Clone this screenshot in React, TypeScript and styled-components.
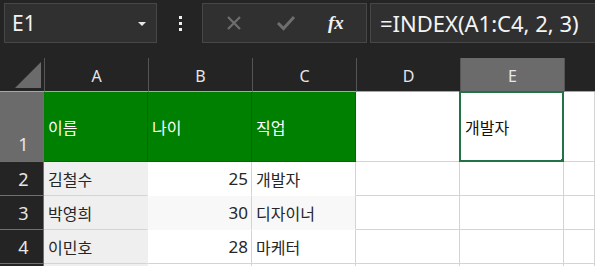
import React from "react";
import styled, { createGlobalStyle } from "styled-components";

const Global = createGlobalStyle`
  html, body { margin: 0; padding: 0; background: #242424; }
  body { width: 595px; height: 266px; overflow: hidden; font-family: "Noto Sans", "Noto Sans CJK KR", sans-serif; }
`;

const Page = styled.div`
  width: 595px;
  height: 266px;
  background: #242424;
  overflow: hidden;
`;

const Toolbar = styled.div`
  height: 58px;
  display: flex;
  align-items: flex-start;
  padding: 3px 0 0 4px;
  box-sizing: border-box;
`;

const Box = styled.div`
  height: 40px;
  box-sizing: border-box;
  background: #303030;
  border: 1px solid #474747;
  display: flex;
  align-items: center;
`;

const NameBox = styled(Box)`
  width: 153px;
  padding: 0 10px 0 7px;
  justify-content: space-between;
  color: #f2f2f2;
  font-size: 21px;
`;

const Caret = styled.span`
  width: 0;
  height: 0;
  border-left: 4px solid transparent;
  border-right: 4px solid transparent;
  border-top: 4px solid #e8e8e8;
  margin-top: 1px;
`;

const Kebab = styled.div`
  width: 44px;
  height: 40px;
  display: flex;
  flex-direction: column;
  align-items: center;
  justify-content: center;
  gap: 3px;
  margin-left: 1px;
`;

const Dot = styled.span`
  width: 3px;
  height: 3px;
  background: #f0f0f0;
`;

const ButtonBox = styled(Box)`
  width: 165px;
  justify-content: space-around;
  padding: 0 6px;
`;

const Fx = styled.span`
  font-family: "Liberation Serif", serif;
  font-style: italic;
  font-weight: bold;
  font-size: 19px;
  color: #f2f2f2;
`;

const FormulaBox = styled(Box)`
  flex: 1;
  margin-left: 3px;
  border-right: none;
  padding-left: 9px;
  color: #f4f4f4;
  font-size: 22px;
  white-space: nowrap;
`;

const Grid = styled.div`
  display: grid;
  grid-template-columns: 44px 104px 104px 104px 104px 104px 1fr;
  grid-template-rows: 34px 70px 34px 34px 34px 34px;
`;

const Corner = styled.div`
  background: #242424;
  border-bottom: 1px solid #a6a6a6;
  position: relative;
  &::after {
    content: "";
    position: absolute;
    right: 3px;
    bottom: 3px;
    width: 0;
    height: 0;
    border-left: 26px solid transparent;
    border-bottom: 26px solid #6b6b6b;
  }
`;

const ColHead = styled.div<{ $active?: boolean }>`
  background: ${(p) => (p.$active ? "#6b6b6b" : "#242424")};
  border-left: 1px solid #555;
  border-bottom: 1px solid #a6a6a6;
  color: #e6e6e6;
  font-size: 16px;
  display: flex;
  align-items: center;
  justify-content: center;
  padding-top: 2px;
  box-sizing: border-box;
`;

const RowHead = styled.div<{ $active?: boolean }>`
  background: ${(p) => (p.$active ? "#6b6b6b" : "#242424")};
  border-bottom: 1px solid #6f6f6f;
  border-right: 1px solid #6f6f6f;
  color: #e6e6e6;
  font-size: 18px;
  display: flex;
  align-items: ${(p) => (p.$active ? "flex-end" : "center")};
  justify-content: center;
  padding-bottom: ${(p) => (p.$active ? "5px" : "0")};
  padding-left: 4px;
  box-sizing: border-box;
`;

type CellKind = "head" | "name" | "plain" | "shade";

const Cell = styled.div<{ $kind: CellKind; $right?: boolean; $noBottom?: boolean }>`
  position: relative;
  box-sizing: border-box;
  display: flex;
  align-items: center;
  justify-content: ${(p) => (p.$right ? "flex-end" : "flex-start")};
  padding: ${(p) => (p.$right ? "0 3px 0 0" : "0 0 0 4px")};
  font-family: "Noto Sans CJK KR", "Noto Sans", sans-serif;
  font-size: 16px;
  white-space: nowrap;
  background: ${(p) =>
    p.$kind === "head" ? "#008000" : p.$kind === "name" ? "#efefef" : p.$kind === "shade" ? "#f8f8f8" : "#ffffff"};
  color: ${(p) => (p.$kind === "head" ? "#ffffff" : "#262626")};
  border-right: 1px solid
    ${(p) => (p.$kind === "head" ? "#006a00" : p.$kind === "name" ? "#efefef" : "#d4d4d4")};
  border-bottom: 1px solid
    ${(p) => (p.$kind === "head" ? "#006a00" : p.$noBottom ? "transparent" : "#d4d4d4")};
`;

const Num = styled.span`
  font-family: "Noto Sans", sans-serif;
  font-size: 17px;
`;

const Selection = styled.div`
  position: absolute;
  left: -1px;
  top: -1px;
  right: -1px;
  bottom: -1px;
  border: 2px solid #217346;
  pointer-events: none;
  &::after {
    content: "";
    position: absolute;
    right: -5px;
    bottom: -5px;
    width: 6px;
    height: 6px;
    background: #217346;
  }
`;

const SelText = styled.span`
  color: #111;
  padding-left: 1px;
`;

const cols = ["A", "B", "C", "D", "E"];

const rows: [string, string, string][] = [
  ["김철수", "25", "개발자"],
  ["박영희", "30", "디자이너"],
  ["이민호", "28", "마케터"],
];

function XIcon() {
  return (
    <svg width="18" height="18" viewBox="0 0 18 18">
      <path d="M3 3 L15 15 M15 3 L3 15" stroke="#6e6e6e" strokeWidth="2.2" />
    </svg>
  );
}

function CheckIcon() {
  return (
    <svg width="20" height="18" viewBox="0 0 20 18">
      <path d="M2 9 L7.5 14.5 L18 3" stroke="#6e6e6e" strokeWidth="3" fill="none" />
    </svg>
  );
}

export default function App() {
  return (
    <Page>
      <Global />
      <Toolbar>
        <NameBox>
          <span>E1</span>
          <Caret />
        </NameBox>
        <Kebab>
          <Dot />
          <Dot />
          <Dot />
        </Kebab>
        <ButtonBox>
          <XIcon />
          <CheckIcon />
          <Fx>fx</Fx>
        </ButtonBox>
        <FormulaBox>=INDEX(A1:C4, 2, 3)</FormulaBox>
      </Toolbar>
      <Grid>
        <Corner />
        {cols.map((c) => (
          <ColHead key={c} $active={c === "E"}>
            {c}
          </ColHead>
        ))}
        <ColHead />

        <RowHead $active>1</RowHead>
        <Cell $kind="head">이름</Cell>
        <Cell $kind="head">나이</Cell>
        <Cell $kind="head">직업</Cell>
        <Cell $kind="plain" />
        <Cell $kind="plain">
          <SelText>개발자</SelText>
          <Selection />
        </Cell>
        <Cell $kind="plain" />

        {rows.map((r, i) => {
          const shade: CellKind = i === 1 ? "shade" : "plain";
          return (
            <React.Fragment key={i}>
              <RowHead>{i + 2}</RowHead>
              <Cell $kind="name">{r[0]}</Cell>
              <Cell $kind={shade} $right $noBottom={i < 2}>
                <Num>{r[1]}</Num>
              </Cell>
              <Cell $kind={shade} $noBottom={i < 2}>{r[2]}</Cell>
              <Cell $kind="plain" />
              <Cell $kind="plain" />
              <Cell $kind="plain" />
            </React.Fragment>
          );
        })}

        <RowHead />
        <Cell $kind="name" />
        <Cell $kind="plain" />
        <Cell $kind="plain" />
        <Cell $kind="plain" />
        <Cell $kind="plain" />
        <Cell $kind="plain" />
      </Grid>
    </Page>
  );
}
